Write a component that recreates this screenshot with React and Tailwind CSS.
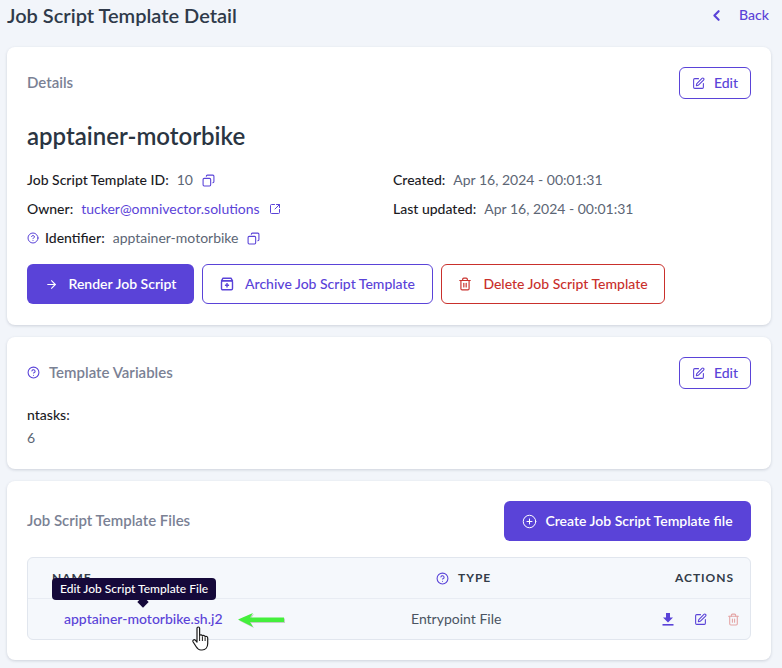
import React from 'react'
import { ArrowRight, ChevronLeft, CircleHelp, CirclePlus, Copy, SquareArrowOutUpRight, SquarePen, Trash2 } from 'lucide-react'

const PURPLE = 'text-[#5a43d8]'

function EditButton() {
  return (
    <button className={`flex items-center justify-center gap-[9px] w-[72px] h-8 rounded-md border border-[#5a43d8] ${PURPLE} text-sm font-medium`}>
      <SquarePen size={13} strokeWidth={2} />
      Edit
    </button>
  )
}

function ArchiveIcon() {
  return (
    <svg width="14" height="14" viewBox="0 0 14 14" fill="none" stroke="currentColor" strokeWidth="1.4" strokeLinejoin="round">
      <path d="M3 1.2h8l1.5 2.6H1.5z" />
      <rect x="1.5" y="3.8" width="11" height="9" rx="1.2" />
      <path d="M7 6v4.4M4.9 8.2h4.2" />
    </svg>
  )
}

function DownloadIcon() {
  return (
    <svg width="12" height="13" viewBox="0 0 12 13" fill="currentColor">
      <path d="M4 0h4v4.5h3L6 9.5 1 4.5h3z" />
      <rect x="0.5" y="11" width="11" height="1.6" />
    </svg>
  )
}

function HandCursor() {
  return (
    <svg width="20" height="26" viewBox="0 0 20 26" className="absolute left-[191px] top-[626px]">
      <path
        d="M6 2.2c0-1.6 2.6-1.6 2.6 0v7.2c.8-1 2.6-.7 2.8.6.8-.9 2.5-.6 2.7.7.9-.7 2.6-.3 2.6 1.2v5.6c0 3.6-2.2 6.5-5.6 6.5H9.8c-2.4 0-3.4-1.2-4.6-3.2L2 15.8c-.9-1.6 1.2-3 2.5-1.5L6 16z"
        fill="#fff"
        stroke="#1a1a1a"
        strokeWidth="1.2"
        strokeLinejoin="round"
      />
      <path d="M8.6 10v5M11.4 10.6V15M14.1 11.4V15" stroke="#1a1a1a" strokeWidth="1" />
    </svg>
  )
}

function CopyBtn() {
  return <Copy size={13} strokeWidth={2} className={`${PURPLE} -scale-x-100`} />
}

export default function App() {
  return (
    <div className="relative w-[782px] h-[668px] overflow-hidden bg-[#f2f5fa] pl-[7px] pr-[11px] font-['Lato','Liberation_Sans',sans-serif] text-sm text-[#27303b]">
      <div className="flex items-center justify-between h-[30px] mb-[17px]">
        <h1 className="text-xl font-semibold text-[#2f3a4a]">Job Script Template Detail</h1>
        <div className={`flex items-center gap-[14px] pr-[1px] mr-[0px] ${PURPLE} font-medium`}>
          <ChevronLeft size={17} strokeWidth={3} />
          <span className="mr-[1px]">Back</span>
        </div>
      </div>

      <section className="bg-white rounded-lg shadow-[0_1px_3px_rgba(40,50,80,0.18)] p-5 h-[278px] mb-3">
        <div className="flex items-center justify-between">
          <h2 className="text-[15px] font-semibold text-[#7a8194]">Details</h2>
          <EditButton />
        </div>
        <h3 className="mt-[21px] h-[32px] leading-[32px] text-2xl font-semibold text-[#2a3542]">apptainer-motorbike</h3>
        <div className="grid grid-cols-[366px_1fr] mt-[18px] text-[#1b1b1f]">
          <div className="flex flex-col gap-[9px]">
            <div className="flex items-center h-5">
              <span className="font-medium">Job Script Template ID:</span>
              <span className="ml-2 text-[#5c6675]">10</span>
              <span className="ml-[9px]"><CopyBtn /></span>
            </div>
            <div className="flex items-center h-5">
              <span className="font-medium">Owner:</span>
              <span className={`ml-2 ${PURPLE}`}>tucker@omnivector.solutions</span>
              <SquareArrowOutUpRight size={12} strokeWidth={2} className={`ml-[9px] ${PURPLE}`} />
            </div>
            <div className="flex items-center h-5">
              <CircleHelp size={12} strokeWidth={2} className={PURPLE} />
              <span className="ml-[6px] font-medium">Identifier:</span>
              <span className="ml-2 text-[#5c6675]">apptainer-motorbike</span>
              <span className="ml-[9px]"><CopyBtn /></span>
            </div>
          </div>
          <div className="flex flex-col gap-[9px]">
            <div className="flex items-center h-5">
              <span className="font-medium">Created:</span>
              <span className="ml-2 text-[#5c6675]">Apr 16, 2024 - 00:01:31</span>
            </div>
            <div className="flex items-center h-5">
              <span className="font-medium">Last updated:</span>
              <span className="ml-2 text-[#5c6675]">Apr 16, 2024 - 00:01:31</span>
            </div>
          </div>
        </div>
        <div className="flex gap-2 mt-[16px]">
          <button className="flex items-center justify-center gap-[11px] w-[167px] h-10 rounded-md bg-[#5a43d8] text-white font-semibold">
            <ArrowRight size={13} strokeWidth={2} />
            Render Job Script
          </button>
          <button className={`flex items-center justify-center gap-[11px] w-[231px] h-10 rounded-md border border-[#5a43d8] ${PURPLE} font-medium`}>
            <ArchiveIcon />
            Archive Job Script Template
          </button>
          <button className="flex items-center justify-center gap-[11px] w-[224px] h-10 rounded-md border border-[#c9302c] text-[#c9302c] font-medium">
            <Trash2 size={14} strokeWidth={2} />
            Delete Job Script Template
          </button>
        </div>
      </section>

      <section className="bg-white rounded-lg shadow-[0_1px_3px_rgba(40,50,80,0.18)] p-5 h-[132px] mb-3">
        <div className="flex items-center justify-between">
          <div className="flex items-center gap-[9px]">
            <CircleHelp size={13} strokeWidth={2} className={PURPLE} />
            <h2 className="text-[15px] font-semibold text-[#7a8194]">Template Variables</h2>
          </div>
          <EditButton />
        </div>
        <div className="mt-[16px] h-5 leading-5 font-medium text-[#1b1b1f]">ntasks:</div>
        <div className="mt-[3px] h-5 leading-5 text-[#5c6675]">6</div>
      </section>

      <section className="bg-white rounded-lg shadow-[0_1px_3px_rgba(40,50,80,0.18)] p-5 h-[179px]">
        <div className="flex items-center justify-between">
          <h2 className="text-[15px] font-semibold text-[#7a8194]">Job Script Template Files</h2>
          <button className="flex items-center justify-center gap-[8px] w-[247px] h-10 rounded-md bg-[#5a43d8] text-white font-semibold">
            <CirclePlus size={15} strokeWidth={1.6} />
            Create Job Script Template file
          </button>
        </div>
        <div className="mt-4 h-[83px] rounded-md border border-[#e1e6ee] bg-[#f5f8fc]">
          <div className="grid grid-cols-[384px_1fr_auto] items-center h-[41px] border-b border-[#e8ecf3] px-6 text-xs font-bold tracking-[0.08em] text-[#333c49]">
            <span>NAME</span>
            <span className="flex items-center gap-[9px]">
              <CircleHelp size={13} strokeWidth={2} className={PURPLE} />
              TYPE
            </span>
            <span className="-mr-2">ACTIONS</span>
          </div>
          <div className="grid grid-cols-[347px_1fr_auto] items-center h-10 pl-9 pr-[10px]">
            <span className={`${PURPLE} font-medium`}>apptainer-motorbike.sh.j2</span>
            <span className="text-[#4a5462]">Entrypoint File</span>
            <span className="flex items-center gap-5">
              <span className={PURPLE}><DownloadIcon /></span>
              <SquarePen size={13} strokeWidth={2} className={PURPLE} />
              <Trash2 size={13} strokeWidth={2} className="text-[#e4a5a5]" />
            </span>
          </div>
        </div>
      </section>

      <div className="absolute left-[52px] top-[578px] h-[22px] px-2 rounded bg-[#15093a] text-white text-xs leading-[22px] font-medium">
        Edit Job Script Template File
        <span className="absolute left-[87px] top-[20px] w-2 h-2 rotate-45 bg-[#15093a]" />
      </div>

      <svg width="48" height="18" viewBox="0 0 48 18" className="absolute left-[238px] top-[611px]">
        <path d="M0 8.5 15 2 12 6.5H46V11H12L15 16z" fill="#8a9a85" opacity="0.45" transform="translate(1 1)" />
        <path d="M0 8.5 15 2 12 6.5H46V11H12L15 16z" fill="#44ef3c" />
      </svg>

      <HandCursor />
    </div>
  )
}
